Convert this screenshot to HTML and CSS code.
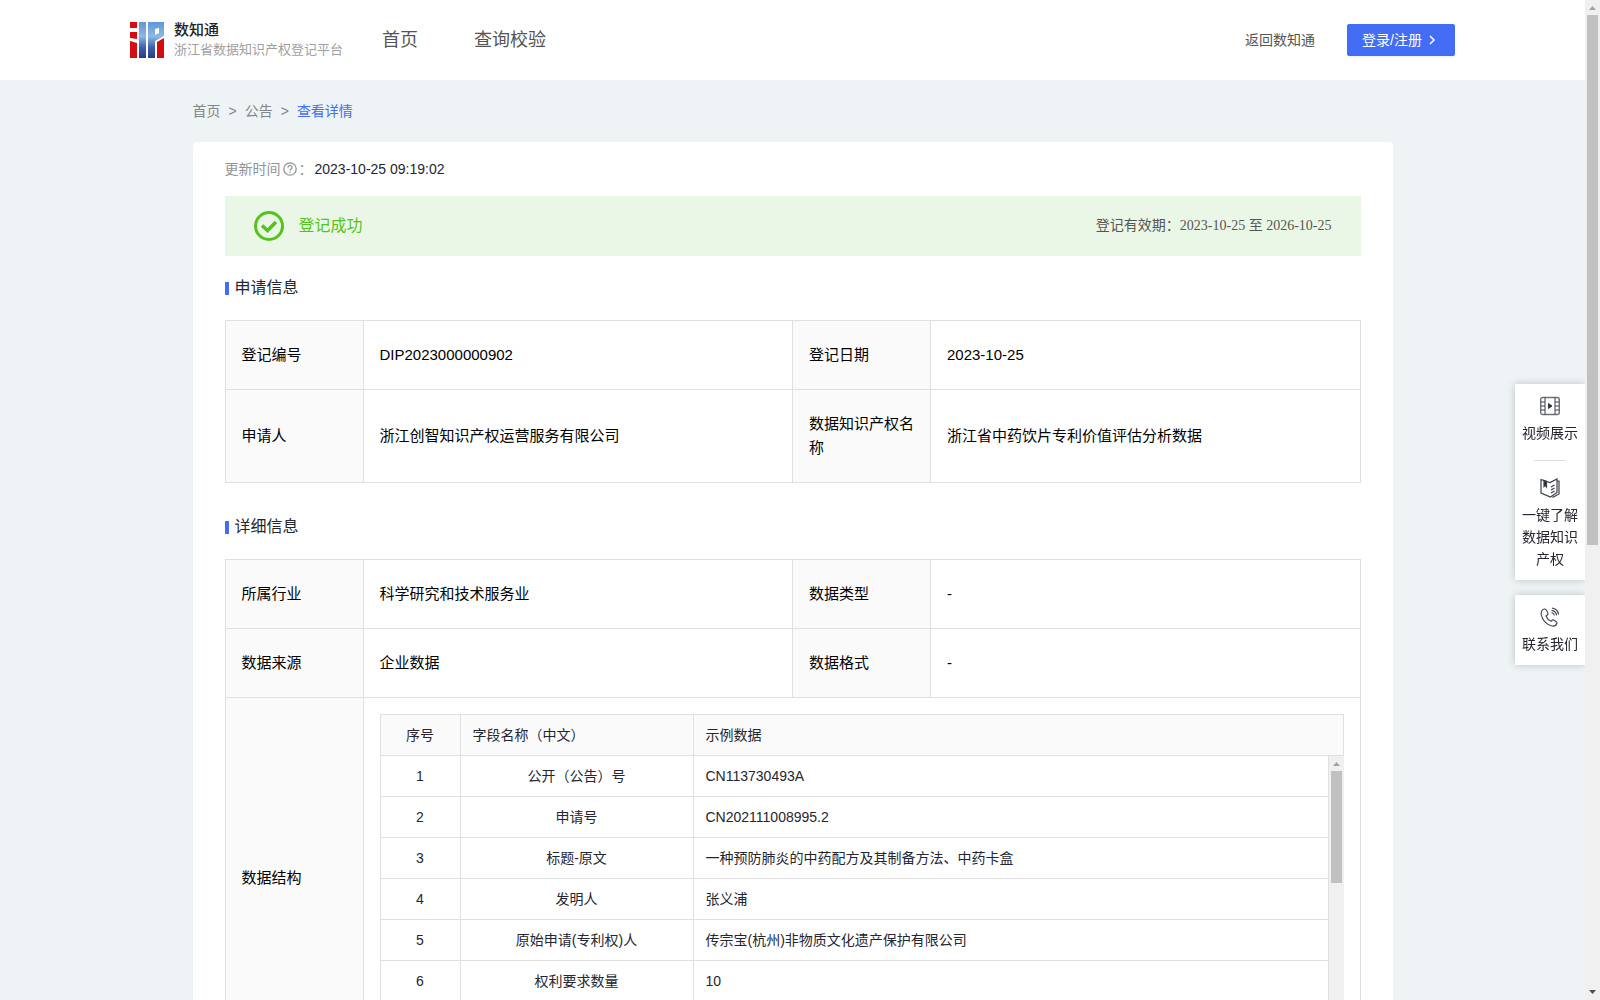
FILE: index.html
```html
<!DOCTYPE html>
<html lang="zh-CN">
<head>
  <meta charset="UTF-8">
  <meta name="viewport" content="width=device-width, initial-scale=1.0">
  <title>浙江省数据知识产权登记平台</title>
  <link rel="stylesheet" href="styles.css">
</head>
<body>
  <header class="header">
    <div class="header-inner">
      <a class="logo" href="#">
        <svg class="logo-icon" width="34" height="36" viewBox="0 0 34 36">
          <defs>
            <linearGradient id="logo-blue" x1="0" y1="0" x2="0" y2="1">
              <stop offset="0" stop-color="#5f97d6"/>
              <stop offset="0.4" stop-color="#8db8e4"/>
              <stop offset="0.7" stop-color="#3f62ac"/>
              <stop offset="1" stop-color="#263c84"/>
            </linearGradient>
          </defs>
          <path fill="#d40b0f" d="M0 0h7v6H0zM0 10h7v7l-7-1zM0 19l7 2v15H0zM27 20l7-4v20h-7z"/>
          <path fill="url(#logo-blue)" fill-rule="evenodd" d="M9 0h7v36H9zM18 0h16v14l-9 5v17h-7zM25 7v6l4-2V6z"/>
        </svg>
        <span class="logo-text">
          <strong>数知通</strong>
          <span>浙江省数据知识产权登记平台</span>
        </span>
      </a>
      <nav class="nav">
        <a href="#">首页</a>
        <a href="#">查询校验</a>
      </nav>
      <a class="back" href="#">返回数知通</a>
      <button class="login" type="button">登录/注册
        <svg width="8" height="10" viewBox="0 0 8 10" fill="none" stroke="#fff" stroke-width="1.5"><path d="M2 1l4 4-4 4"/></svg>
      </button>
    </div>
  </header>

  <main class="main">
    <nav class="breadcrumb">
      <a href="#">首页</a><span>&gt;</span><a href="#">公告</a><span>&gt;</span><a class="current" href="#">查看详情</a>
    </nav>
    <div class="card">
      <div class="update">
        <span class="update-label">更新时间</span>
        <svg width="14" height="14" viewBox="0 0 14 14" fill="none" stroke="#909399" stroke-width="1.3"><circle cx="7" cy="7" r="6.2"/><path d="M5 5.600a2 2 0 1 1 3 1.600c-.7.4-1 .7-1 1.300M7 9.600v1.200"/></svg>
        <span class="update-label">：</span>
        <span>2023-10-25 09:19:02</span>
      </div>
      <div class="banner">
        <svg width="30" height="30" viewBox="0 0 30 30" fill="none" stroke="#52c41a"><circle cx="15" cy="15" r="13.500" stroke-width="3"/><path stroke-width="3.600" d="M8 14.500l5.500 5L22 11"/></svg>
        <span class="banner-status">登记成功</span>
        <span class="banner-date">登记有效期：2023-10-25 至 2026-10-25</span>
      </div>

      <h2 class="title">申请信息</h2>
      <table class="info">
        <tr>
          <th>登记编号</th>
          <td>DIP2023000000902</td>
          <th>登记日期</th>
          <td>2023-10-25</td>
        </tr>
        <tr>
          <th>申请人</th>
          <td>浙江创智知识产权运营服务有限公司</td>
          <th>数据知识产权名称</th>
          <td>浙江省中药饮片专利价值评估分析数据</td>
        </tr>
      </table>

      <h2 class="title">详细信息</h2>
      <table class="info">
        <tr>
          <th>所属行业</th>
          <td>科学研究和技术服务业</td>
          <th>数据类型</th>
          <td>-</td>
        </tr>
        <tr>
          <th>数据来源</th>
          <td>企业数据</td>
          <th>数据格式</th>
          <td>-</td>
        </tr>
        <tr>
          <th>数据结构</th>
          <td class="wrap" colspan="3">
            <table class="fields">
              <thead>
                <tr><th class="num">序号</th><th class="name">字段名称（中文）</th><th>示例数据</th></tr>
              </thead>
            </table>
            <div class="fields-body">
              <div class="fields-rows">
                <table class="fields">
                  <tr><td class="num">1</td><td class="name">公开（公告）号</td><td>CN113730493A</td></tr>
                  <tr><td>2</td><td>申请号</td><td>CN202111008995.2</td></tr>
                  <tr><td>3</td><td>标题-原文</td><td>一种预防肺炎的中药配方及其制备方法、中药卡盒</td></tr>
                  <tr><td>4</td><td>发明人</td><td>张义浦</td></tr>
                  <tr><td>5</td><td>原始申请(专利权)人</td><td>传宗宝(杭州)非物质文化遗产保护有限公司</td></tr>
                  <tr><td>6</td><td>权利要求数量</td><td>10</td></tr>
                </table>
              </div>
              <div class="scrollbar">
                <svg class="arrow" width="15" height="15" viewBox="0 0 15 15"><path fill="#a3a3a3" d="M4 10l3.500-4 3.500 4z"/></svg>
                <div class="track"><div class="thumb thumb-fields"></div></div>
                <svg class="arrow" width="15" height="15" viewBox="0 0 15 15"><path fill="#505050" d="M4 5l3.500 4L11 5z"/></svg>
              </div>
            </div>
          </td>
        </tr>
      </table>
    </div>
  </main>

  <aside class="side">
    <div class="side-box">
      <a href="#">
        <svg width="20" height="20" viewBox="0 0 20 20" fill="none" stroke="#3c3f4a"><rect x=".7" y="1.500" width="18.600" height="17" rx="2" stroke="#6d7078" stroke-width="1.400"/><path d="M5 1.500v17M15 1.500v17M1 6h4M1 10h4M1 14h4M15 6h4M15 10h4M15 14h4"/><path fill="#252631" d="M8.500 7.500v5l3.500-2.500z"/></svg>
        <span>视频展示</span>
      </a>
      <hr>
      <a href="#">
        <svg width="20" height="20" viewBox="0 0 20 20" fill="none" stroke="#3c3f4a" stroke-width="1.200"><path d="M1 1.500l9 3 7-3.500v13.500l-6.500 4.500L1 15zM17 3h2v13l-6.500 3.500M11 9l3.500-2M11 12l3.500-2M11 15l3.500-2"/><path fill="#252631" d="M4 2.500v6l1.200-1.200L6.500 9V3.500z"/></svg>
        <span>一键了解数据知识产权</span>
      </a>
    </div>
    <div class="side-box">
      <a href="#">
        <svg width="20" height="20" viewBox="0 0 20 20" fill="none" stroke="#4a4d57" stroke-width="1.200"><path d="M4.500 2C2 2.500 1 4.500 1.200 7.500c.8 5.500 5.500 10.500 10.800 11.500 2.500.3 4.500-1 5-3 .2-.8-3.500-3.500-4.500-3L11 14.300C9 13.500 7 11.500 6 9l1.800-1.500C8.500 6.500 6 1.500 4.500 2zM11.500 5.500c1.800.5 2.700 1.500 3 3M11.500 3.300c3 .4 4.700 2 5.200 5M12 1.200c4 .5 6 2.500 6.500 6.300"/></svg>
        <span>联系我们</span>
      </a>
    </div>
  </aside>

  <div class="scrollbar page-scrollbar">
    <svg class="arrow" width="15" height="15" viewBox="0 0 15 15"><path fill="#a3a3a3" d="M4 10l3.500-4 3.500 4z"/></svg>
    <div class="track"><div class="thumb thumb-page"></div></div>
    <svg class="arrow" width="15" height="15" viewBox="0 0 15 15"><path fill="#505050" d="M4 5l3.500 4L11 5z"/></svg>
  </div>
</body>
</html>
```
FILE: styles.css
```css
* {
  box-sizing: border-box;
}
body {
  font-family: 'Liberation Sans', 'Noto Sans CJK SC', sans-serif;
  margin: 0;
  padding-right: 15px;
  font-size: 14px;
  line-height: 22px;
  color: #252631;
  background: #eef3f6;
}
a {
  color: inherit;
  text-decoration: none;
}
.header {
  background: #fff;
}
.header-inner {
  display: flex;
  align-items: center;
  height: 80px;
  padding: 0 130px;
}
.logo {
  display: flex;
  align-items: center;
  gap: 10px;
}
.logo-text {
  display: flex;
  flex-direction: column;
  font-size: 13px;
  line-height: 20px;
  color: #a0a0a4;
}
.logo-text strong {
  font-size: 15px;
  font-weight: 500;
  color: #222;
}
.nav {
  display: flex;
  gap: 56px;
  margin-left: 39px;
  font-size: 18px;
  color: #555;
}
.back {
  margin-left: auto;
  color: #555;
}
.login {
  display: flex;
  align-items: center;
  gap: 6px;
  height: 32px;
  margin-left: 32px;
  padding: 0 19px 0 15px;
  font: inherit;
  color: #fff;
  background: #446df6;
  border: 0;
  border-radius: 2px;
  box-shadow: 0 2px 0 rgba(0, 0, 0, 0.04);
}
.main {
  max-width: 1200px;
  margin: 0 auto;
}
.breadcrumb {
  display: flex;
  gap: 8px;
  padding: 20px 0;
  color: #858589;
}
.breadcrumb .current {
  color: #446df6;
}
.card {
  padding: 16px 32px 32px;
  background: #fff;
  border-radius: 4px;
}
.update {
  display: flex;
  align-items: center;
  gap: 2px;
}
.update-label {
  color: #909399;
}
.banner {
  display: flex;
  align-items: center;
  height: 60px;
  margin-top: 16px;
  padding: 0 29px;
  background: #ebf7e6;
}
.banner-status {
  margin-left: 15px;
  font-size: 16px;
  color: #52c41a;
}
.banner-date {
  margin-left: auto;
  font-family: 'Liberation Serif', 'Noto Sans CJK SC', serif;
  color: #555;
}
.title {
  display: flex;
  align-items: center;
  gap: 6px;
  margin: 20px 0;
  font-size: 16px;
  font-weight: 400;
  line-height: 24px;
}
.title::before {
  content: '';
  width: 4px;
  height: 13px;
  background: #446df6;
}
table {
  width: 100%;
  border-collapse: collapse;
  table-layout: fixed;
}
th, td {
  border: 1px solid #e0e0e0;
  font-weight: 400;
  text-align: left;
}
th {
  background: #fafafa;
}
.info {
  margin-bottom: 32px;
  font-size: 15px;
  line-height: 24px;
  color: #000;
}
.info th, .info td {
  padding: 22px 16px;
}
.info th {
  width: 138px;
}
.info .wrap {
  padding: 16px;
}
.fields {
  font-size: 14px;
  line-height: 20px;
  color: #252631;
}
.info .fields th, .info .fields td {
  padding: 10px 12px;
}
.info .fields td {
  text-align: center;
}
.info .fields td:last-child {
  text-align: left;
}
.info .fields .num {
  width: 80px;
  text-align: center;
}
.info .fields .name {
  width: 233px;
}
.info .fields th:last-child {
  width: auto;
}
.fields-body {
  display: flex;
  height: 286px;
}
.fields-rows {
  flex: 1;
  overflow: hidden;
}
.fields-rows tr:first-child td {
  border-top: 0;
}
.scrollbar {
  display: flex;
  flex-direction: column;
  width: 15px;
  background: #f0f0f0;
}
.arrow {
  flex: none;
}
.track {
  flex: 1;
  padding: 0 2px;
}
.thumb {
  background: #c1c1c1;
}
.thumb-fields {
  height: 112px;
}
.thumb-page {
  height: 53vh;
}
.page-scrollbar {
  position: fixed;
  top: 0;
  right: 0;
  bottom: 0;
}
.side {
  position: fixed;
  top: 384px;
  right: 15px;
  width: 70px;
}
.side-box {
  margin-bottom: 15px;
  background: #fff;
  box-shadow: 0 0 8px rgba(0, 0, 0, 0.2);
}
.side-box a {
  display: flex;
  flex-direction: column;
  align-items: center;
  gap: 6px;
  padding: 12px 7px 10px;
  text-align: center;
}
.side-box hr {
  width: 32px;
  height: 1px;
  margin: 6px auto 5px;
  border: 0;
  background: #ddd;
}
```
